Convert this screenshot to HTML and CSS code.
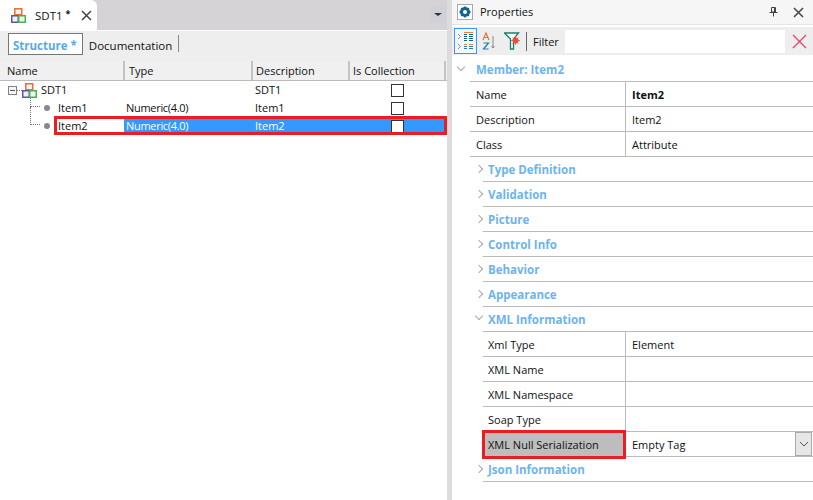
FILE: index.html
```html
<!DOCTYPE html>
<html>
  <head>
    <title>SDT1 - Properties</title>
    <link rel="stylesheet" href="styles.css">
  </head>
  <body>
    <div class="editor">
      <div class="tabstrip">
        <div class="tab">
          <svg class="sdt-icon" width="15" height="15" viewBox="0 0 15 15">
            <rect x="3.750" y="0.750" width="7" height="6" fill="#fdf3ec" stroke="#e8703a" stroke-width="1.500"/>
            <rect x="0.750" y="7.750" width="6.500" height="6.500" fill="#f0f0fa" stroke="#5a5aa8" stroke-width="1.500"/>
            <rect x="7.750" y="7.750" width="6.500" height="6.500" fill="#eef9ee" stroke="#4caf50" stroke-width="1.500"/>
          </svg>
          <span class="tab-title">SDT1</span>
          <span class="tab-dot">*</span>
          <svg class="tab-close" width="11" height="11" viewBox="0 0 11 11">
            <path d="M1 1l9 9M10 1l-9 9" stroke="#444" stroke-width="1.500"/>
          </svg>
        </div>
        <div class="tab-menu"><span class="tab-arrow"></span></div>
      </div>
      <div class="subtabs">
        <div class="subtab active">Structure *</div>
        <div class="subtab">Documentation</div>
      </div>
      <div class="grid">
        <div class="grid-head">
          <div class="col col-name">Name</div>
          <div class="col col-type">Type</div>
          <div class="col col-desc">Description</div>
          <div class="col col-coll">Is Collection</div>
        </div>
        <div class="grid-row">
          <div class="cell col-name root-cell">
            <span class="expander"></span>
            <span class="h-dots"></span>
            <svg class="sdt-icon" width="15" height="15" viewBox="0 0 15 15">
              <rect x="3.750" y="0.750" width="7" height="6" fill="#fdf3ec" stroke="#e8703a" stroke-width="1.500"/>
              <rect x="0.750" y="7.750" width="6.500" height="6.500" fill="#f0f0fa" stroke="#5a5aa8" stroke-width="1.500"/>
              <rect x="7.750" y="7.750" width="6.500" height="6.500" fill="#eef9ee" stroke="#4caf50" stroke-width="1.500"/>
            </svg>
            <span class="root-label">SDT1</span>
          </div>
          <div class="cell col-type"></div>
          <div class="cell col-desc">SDT1</div>
          <div class="cell col-coll"><span class="check"></span></div>
        </div>
        <div class="grid-row">
          <div class="cell col-name item-cell">
            <span class="tree-line"></span>
            <span class="bullet"></span>
            <span class="item-label">Item1</span>
          </div>
          <div class="cell col-type">Numeric(4.0)</div>
          <div class="cell col-desc">Item1</div>
          <div class="cell col-coll"><span class="check"></span></div>
        </div>
        <div class="grid-row selected">
          <div class="cell col-name item-cell">
            <span class="tree-line last"></span>
            <span class="bullet"></span>
            <span class="item-label">Item2</span>
          </div>
          <div class="cell col-type">Numeric(4.0)</div>
          <div class="cell col-desc">Item2</div>
          <div class="cell col-coll"><span class="check"></span></div>
          <div class="red-row"></div>
        </div>
      </div>
    </div>

    <div class="splitter"></div>

    <div class="props">
      <div class="props-head">
        <svg class="gear" width="16" height="16" viewBox="0 0 16 16">
          <rect x="0.500" y="0.500" width="15" height="15" fill="#fff" stroke="#aaa"/>
          <circle cx="8" cy="8" r="3.500" fill="none" stroke="#12648f" stroke-width="3"/>
          <path d="M8 2.500v2M8 11.500v2M2.500 8h2M11.500 8h2M4.200 4.200l1.300 1.300M10.500 10.500l1.300 1.300M11.800 4.200l-1.300 1.300M5.500 10.500l-1.300 1.300" stroke="#12648f" stroke-width="1.800"/>
        </svg>
        <span class="props-title">Properties</span>
        <svg class="pin" width="9" height="10" viewBox="0 0 9 10">
          <path d="M2.500 0.500h4v4.500h-4zM0.500 5.500h8M4.500 5.500v4M5.500 1v4" fill="none" stroke="#444"/>
        </svg>
        <svg class="props-close" width="11" height="11" viewBox="0 0 11 11">
          <path d="M1 1l9 9M10 1l-9 9" stroke="#444" stroke-width="1.500"/>
        </svg>
      </div>
      <div class="props-tools">
        <div class="tool tool-active">
          <svg width="18" height="20" viewBox="0 0 18 20">
            <path d="M1 3l2.500 2.500L1 8M1 13l2.500 2.500L1 18" fill="none" stroke="#888"/>
            <path d="M7 3.500h3M7 5.500h3M7 7.500h3M7 9.500h3M12 3.500h4M12 5.500h4M12 7.500h4M12 9.500h4" stroke="#12648f"/>
            <path d="M7 1.500h9" stroke="#e8823a"/>
            <path d="M7 13.500h3M12 13.500h4" stroke="#e8823a"/>
            <path d="M7 15.500h3M7 17.500h3M12 15.500h4M12 17.500h4" stroke="#1f7fb5"/>
          </svg>
        </div>
        <svg class="tool-icon" width="14" height="20" viewBox="0 0 14 20">
          <path d="M1 9l3-7 3 7M2.200 6.500h3.600" fill="none" stroke="#e8703a" stroke-width="1.200"/>
          <path d="M1.500 12h5l-5 6h5" fill="none" stroke="#1f7fb5" stroke-width="1.200"/>
          <path d="M11 5v12M9.500 15l1.500 2 1.500-2" fill="none" stroke="#888"/>
        </svg>
        <svg class="tool-icon filter-icon" width="17" height="18" viewBox="0 0 17 18">
          <path d="M0.500 1h14l-5 6v10h-3V7z" fill="#fff" stroke="#12806f" stroke-width="1.300"/>
          <circle cx="11.500" cy="8.500" r="3" fill="#e8503a"/>
          <path d="M11.500 4v9M7 8.500h9M8.500 5.500l6 6M14.500 5.500l-6 6" stroke="#e8503a" stroke-width="0.800"/>
        </svg>
        <span class="tool-sep"></span>
        <span class="filter-label">Filter</span>
        <div class="filter-input"></div>
        <svg class="filter-clear" width="15" height="15" viewBox="0 0 15 15">
          <path d="M1 1l13 13M14 1L1 14" stroke="#e8436e" stroke-width="1.300"/>
        </svg>
      </div>

      <div class="section-title"><span class="chev open"></span><span class="section-text">Member: Item2</span></div>
      <div class="prop-list">
        <div class="prop"><div class="prop-key">Name</div><div class="prop-val bold">Item2</div></div>
        <div class="prop"><div class="prop-key">Description</div><div class="prop-val">Item2</div></div>
        <div class="prop"><div class="prop-key">Class</div><div class="prop-val">Attribute</div></div>
      </div>

      <div class="group"><span class="chev"></span>Type Definition</div>
      <div class="group"><span class="chev"></span>Validation</div>
      <div class="group"><span class="chev"></span>Picture</div>
      <div class="group"><span class="chev"></span>Control Info</div>
      <div class="group"><span class="chev"></span>Behavior</div>
      <div class="group"><span class="chev"></span>Appearance</div>
      <div class="group"><span class="chev open"></span>XML Information</div>
      <div class="sub-list">
        <div class="prop"><div class="prop-key">Xml Type</div><div class="prop-val">Element</div></div>
        <div class="prop"><div class="prop-key">XML Name</div><div class="prop-val"></div></div>
        <div class="prop"><div class="prop-key">XML Namespace</div><div class="prop-val"></div></div>
        <div class="prop"><div class="prop-key">Soap Type</div><div class="prop-val"></div></div>
        <div class="prop">
          <div class="prop-key key-selected">XML Null Serialization</div>
          <div class="prop-val combo-val">
            <span>Empty Tag</span>
            <span class="combo-btn">
              <svg width="10" height="6" viewBox="0 0 10 6"><path d="M1 1l4 4 4-4" fill="none" stroke="#555"/></svg>
            </span>
          </div>
        </div>
      </div>
      <div class="group"><span class="chev"></span>Json Information</div>
    </div>
  </body>
</html>
```

FILE: styles.css
```css
html, body {
  height: 100%;
}
body {
  margin: 0;
  display: flex;
  height: 500px;
  overflow: hidden;
  font-family: "Open Sans", "Noto Sans", sans-serif;
  font-size: 11px;
  color: #111;
  background-color: #fff;
}

/* left side */
.editor {
  width: 447px;
  flex-shrink: 0;
}
.tabstrip {
  display: flex;
  justify-content: space-between;
  height: 30px;
  background-color: #d5d3d6;
}
.tab {
  display: flex;
  align-items: center;
  width: 97px;
  height: 30px;
  box-sizing: border-box;
  padding-left: 11px;
  background-color: #fff;
  border-top-right-radius: 6px;
}
.tab-title {
  margin-left: 9px;
  font-size: 11.5px;
}
.tab-dot {
  width: 8px;
  margin: -3px 0 0 3px;
  font-size: 9px;
  font-weight: bold;
}
.tab-close {
  margin-left: 7px;
}
.tab-menu {
  display: flex;
  align-items: center;
  justify-content: center;
  width: 16px;
  height: 17px;
  margin: 6px 1px 0 0;
  background-color: #d0d0d8;
}
.tab-arrow {
  border-left: 4px solid transparent;
  border-right: 4px solid transparent;
  border-top: 3px solid #333;
}
.subtabs {
  display: flex;
  align-items: flex-start;
  height: 31px;
  box-sizing: border-box;
  padding: 2px 0 0 8px;
  border-top: 1px solid #fff;
  background-color: #eee;
}
.subtab {
  height: 17px;
  line-height: 21px;
  margin: 2px 0 0 6px;
  padding-right: 6px;
  border-right: 1px solid #888;
  font-size: 11.5px;
}
.subtab.active {
  height: 22px;
  box-sizing: border-box;
  line-height: 23px;
  margin: 0;
  padding: 0 5px 0 4px;
  border: 1px solid #777;
  background-color: #fff;
  color: #5aa9e6;
  font-weight: bold;
}
.grid-head {
  display: flex;
  height: 19px;
  background-color: #f0f0f0;
  border-bottom: 1px solid #bbb;
}
.col {
  box-sizing: border-box;
  flex-shrink: 0;
  line-height: 20px;
  border-right: 2px solid #c4c4c4;
}
.col.col-name { width: 125px; padding-left: 7px; }
.col.col-type { width: 128px; padding-left: 4px; }
.col.col-desc { width: 97px; padding-left: 3px; }
.col.col-coll { width: 96px; padding-left: 3px; }
.grid-row {
  position: relative;
  display: flex;
  height: 18px;
  line-height: 18px;
}
.cell {
  box-sizing: border-box;
  flex-shrink: 0;
}
.cell.col-name { width: 126px; }
.cell.col-type { width: 128px; letter-spacing: -0.3px; }
.cell.col-desc { width: 97px; padding-left: 1px; }
.cell.col-coll {
  display: flex;
  justify-content: center;
  align-items: center;
  width: 92px;
}
.root-cell {
  display: flex;
  align-items: center;
  padding-left: 8px;
}
.expander {
  box-sizing: border-box;
  width: 9px;
  height: 9px;
  border: 1px solid #7a7f9a;
  background: #f4f4f4 linear-gradient(#555, #555) center / 5px 1px no-repeat;
}
.h-dots {
  width: 5px;
  border-top: 1px dotted #777;
}
.root-label {
  margin-left: 4px;
}
.item-cell {
  position: relative;
}
.tree-line {
  position: absolute;
  left: 30px;
  top: -1px;
  width: 9px;
  height: 8px;
  border-left: 1px dotted #777;
  border-bottom: 1px dotted #777;
}
.tree-line.last {
  top: -10px;
  height: 17px;
}
.bullet {
  position: absolute;
  left: 44px;
  top: 6px;
  width: 6px;
  height: 6px;
  border-radius: 50%;
  background-color: #888;
}
.item-label {
  margin-left: 58px;
}
.check {
  box-sizing: border-box;
  width: 13px;
  height: 13px;
  border: 1px solid #333;
  background-color: #fff;
}
.selected {
  background: linear-gradient(#3399ff, #3399ff) 124px 0 / 321px 100% no-repeat;
}
.selected .col-type,
.selected .col-desc {
  color: #fff;
}
.red-row {
  position: absolute;
  left: 54px;
  top: -1px;
  width: 393px;
  height: 19px;
  box-sizing: border-box;
  border: 3px solid #ed1c24;
}

.splitter {
  width: 5px;
  flex-shrink: 0;
  background-color: #dcdcdc;
}

/* properties */
.props {
  flex: 1;
  min-width: 0;
}
.props-head {
  display: flex;
  align-items: center;
  height: 24px;
  padding-left: 5px;
  background-color: #f6f6f6;
  border-bottom: 1px solid #e4e4e4;
}
.gear {
  margin-right: 7px;
}
.props-title {
  flex: 1;
  margin-top: -2px;
}
.pin {
  margin-right: 15px;
}
.props-close {
  margin-right: 9px;
}
.props-tools {
  display: flex;
  align-items: center;
  height: 28px;
  margin-top: 2px;
  padding: 0 6px 0 2px;
  background-color: #eee;
}
.tool {
  display: flex;
  align-items: center;
  justify-content: center;
  box-sizing: border-box;
  width: 23px;
  height: 26px;
}
.tool-active {
  border: 1px solid #3399ff;
  background-color: #f4f8fc;
}
.tool-icon {
  margin-left: 5px;
}
.filter-icon {
  margin-left: 8px;
}
.tool-sep {
  width: 1px;
  height: 19px;
  margin-left: 5px;
  background-color: #667;
}
.filter-label {
  margin-left: 6px;
}
.filter-input {
  flex: 1;
  height: 23px;
  margin-left: 6px;
  background-color: #fff;
}
.filter-clear {
  margin-left: 7px;
}
.section-title {
  display: flex;
  align-items: center;
  height: 25px;
  margin-top: 1px;
  padding-left: 6px;
  font-weight: bold;
  font-size: 11.5px;
  color: #6db4ee;
}
.section-title .chev {
  margin-right: 12px;
}
.section-text {
  margin-top: 2px;
}
.prop-list {
  margin-left: 18px;
  border-top: 1px solid #bbb;
}
.sub-list {
  margin-left: 31px;
}
.prop {
  display: flex;
  height: 25px;
  box-sizing: border-box;
  line-height: 26px;
  border-bottom: 1px solid #bbb;
}
.prop-key {
  box-sizing: border-box;
  flex-shrink: 0;
  height: 24px;
  padding-left: 6px;
  border-right: 1px solid #bbb;
}
.prop-list .prop-key { width: 156px; }
.sub-list .prop-key { width: 143px; padding-left: 5px; }
.prop-val {
  flex: 1;
  padding-left: 6px;
}
.bold {
  font-weight: bold;
}
.sub-list .key-selected {
  position: relative;
  width: 144px;
  height: 29px;
  margin: -2px 0 0 -1px;
  padding-left: 3px;
  line-height: 24px;
  border: 3px solid #ed1c24;
  background-color: #bdbdbd;
}
.combo-val {
  display: flex;
  justify-content: space-between;
  padding-right: 1px;
}
.combo-btn {
  display: flex;
  align-items: center;
  justify-content: center;
  box-sizing: border-box;
  width: 17px;
  height: 24px;
  border: 1px solid #aaa;
  background-color: #e6e6e6;
}
.group {
  position: relative;
  display: flex;
  align-items: center;
  height: 25px;
  box-sizing: border-box;
  margin-left: 31px;
  padding-left: 5px;
  border-bottom: 1px solid #bbb;
  font-weight: bold;
  font-size: 11.5px;
  color: #6db4ee;
}
.group .chev {
  position: absolute;
  left: -7px;
  top: 9px;
}
.chev {
  display: inline-block;
  box-sizing: border-box;
  width: 6px;
  height: 6px;
  border-top: 1px solid #a8a8a8;
  border-right: 1px solid #a8a8a8;
  transform: rotate(45deg);
}
.chev.open {
  transform: rotate(135deg);
  margin-top: -3px;
}
```
